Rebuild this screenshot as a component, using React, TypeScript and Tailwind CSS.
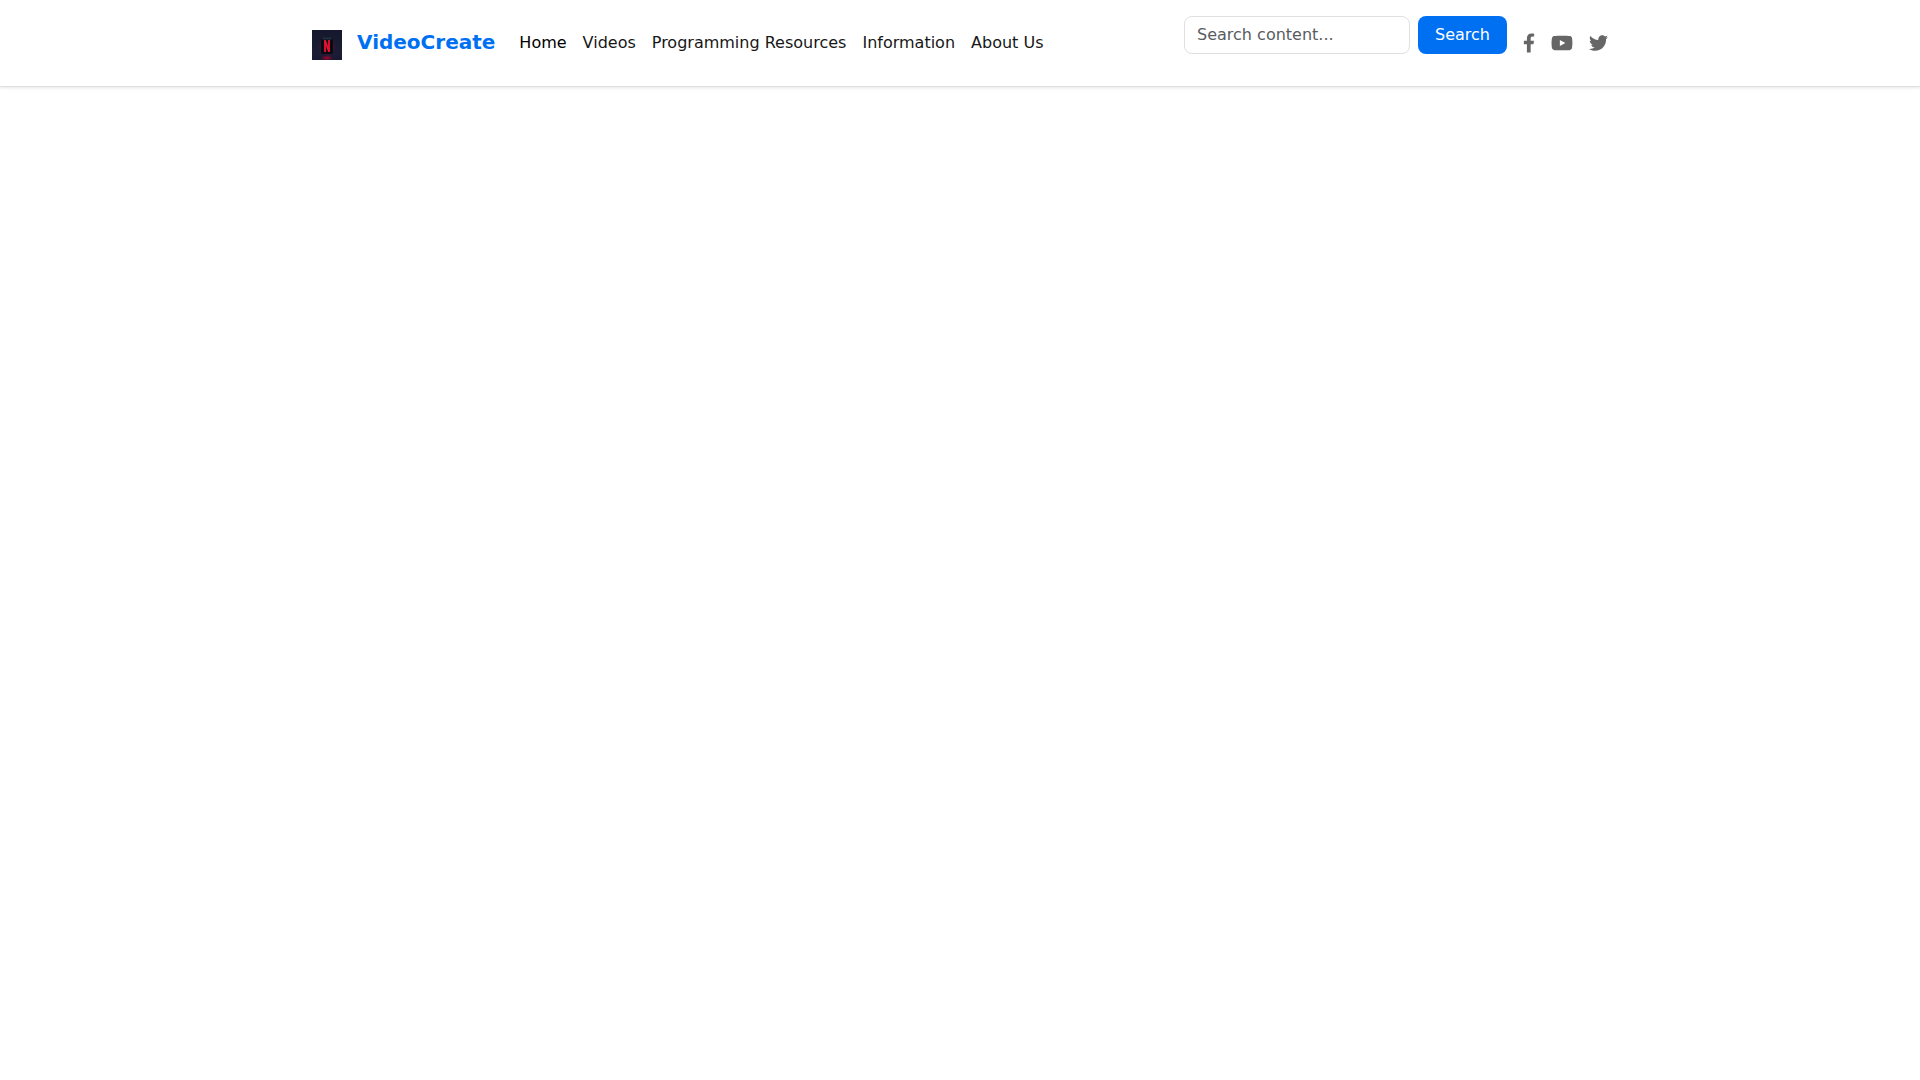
import { FC } from "react";
import { IconType } from "react-icons";
import { FaFacebookF, FaTwitter, FaYoutube } from "react-icons/fa";

type NavItem = {
  label: string;
  href: string;
  active?: boolean;
}

type SocialItem = {
  label: string;
  Icon: IconType;
  className: string;
}

const navItems: NavItem[] = [
  { label: 'Home', href: '#home', active: true },
  { label: 'Videos', href: '#videos' },
  { label: 'Programming Resources', href: '#resources' },
  { label: 'Information', href: '#information' },
  { label: 'About Us', href: '#about' },
]

const socialItems: SocialItem[] = [
  { label: 'Facebook', Icon: FaFacebookF, className: 'h-5 w-3' },
  { label: 'YouTube', Icon: FaYoutube, className: 'h-5 w-[22px]' },
  { label: 'Twitter', Icon: FaTwitter, className: 'h-5 w-[19px]' },
]

const Logo: FC = () => (
  <svg viewBox="0 0 30 30" className="size-[30px]" aria-hidden="true">
    <defs>
      <linearGradient id="night" x1="0" y1="0" x2="0" y2="1">
        <stop offset="0" stopColor="#15182c" />
        <stop offset="0.8" stopColor="#1c1d35" />
        <stop offset="1" stopColor="#191930" />
      </linearGradient>
      <radialGradient id="glow">
        <stop offset="0" stopColor="#a80026" />
        <stop offset="1" stopColor="#a80026" stopOpacity="0" />
      </radialGradient>
    </defs>
    <rect width="30" height="30" fill="url(#night)" />
    <ellipse cx="15" cy="17" rx="9" ry="9" fill="url(#glow)" opacity="0.7" />
    <ellipse cx="15" cy="28" rx="6" ry="3" fill="url(#glow)" />
    <rect x="9" y="8" width="12" height="16" rx="2" fill="#0b0a14" />
    <rect x="10" y="7.5" width="10" height="2" rx="1" fill="#203040" />
    <g stroke="#f01030" strokeWidth="1.8">
      <line x1="13" y1="10" x2="13" y2="22" />
      <line x1="17" y1="10" x2="17" y2="22" />
      <line x1="13" y1="10.5" x2="17" y2="21.5" />
    </g>
  </svg>
)

const SearchForm: FC = () => (
  <form className="flex gap-2 self-start" onSubmit={(e) => e.preventDefault()}>
    <input
      type="search"
      aria-label="Search"
      placeholder="Search content..."
      className="h-[38px] w-[226px] rounded-lg border border-[#e0e0e0] bg-white px-3 pb-0.5 text-base text-[#212529] placeholder:text-[#595c5f]"
    />
    <button type="submit" className="h-[38px] rounded-lg bg-[#0070f3] px-[17px] text-base text-white">
      Search
    </button>
  </form>
)

const App: FC = () => {
  return (
    <div className="min-h-screen bg-white font-['DejaVu_Sans',sans-serif]">
      <header className="border-b border-[#e0e0e0] shadow-[0_1px_3px_rgba(0,0,0,0.1)]">
        <nav className="mx-auto flex max-w-[1320px] items-start px-3 pt-4 pb-4">
          <a href="#home" className="flex items-start gap-[15px] text-xl font-bold text-[#0070f3]">
            <span className="pt-[14px] pb-[10px]">
              <Logo />
            </span>
            <span className="pt-3">VideoCreate</span>
          </a>
          <ul className="ml-6 flex gap-4 pt-[15px]">
            {navItems.map(({ label, href, active }) => (
              <li key={label}>
                <a href={href} className={active ? 'text-black' : 'text-[#171717]'}>
                  {label}
                </a>
              </li>
            ))}
          </ul>
          <div className="ml-auto flex items-start gap-4">
            <SearchForm />
            <div className="flex gap-4 pt-[17px] text-[#666666]">
              {socialItems.map(({ label, Icon, className }) => (
                <a key={label} href={`#${label.toLowerCase()}`} aria-label={label}>
                  <Icon className={className} />
                </a>
              ))}
            </div>
          </div>
        </nav>
      </header>
    </div>
  );
}

export default App;
